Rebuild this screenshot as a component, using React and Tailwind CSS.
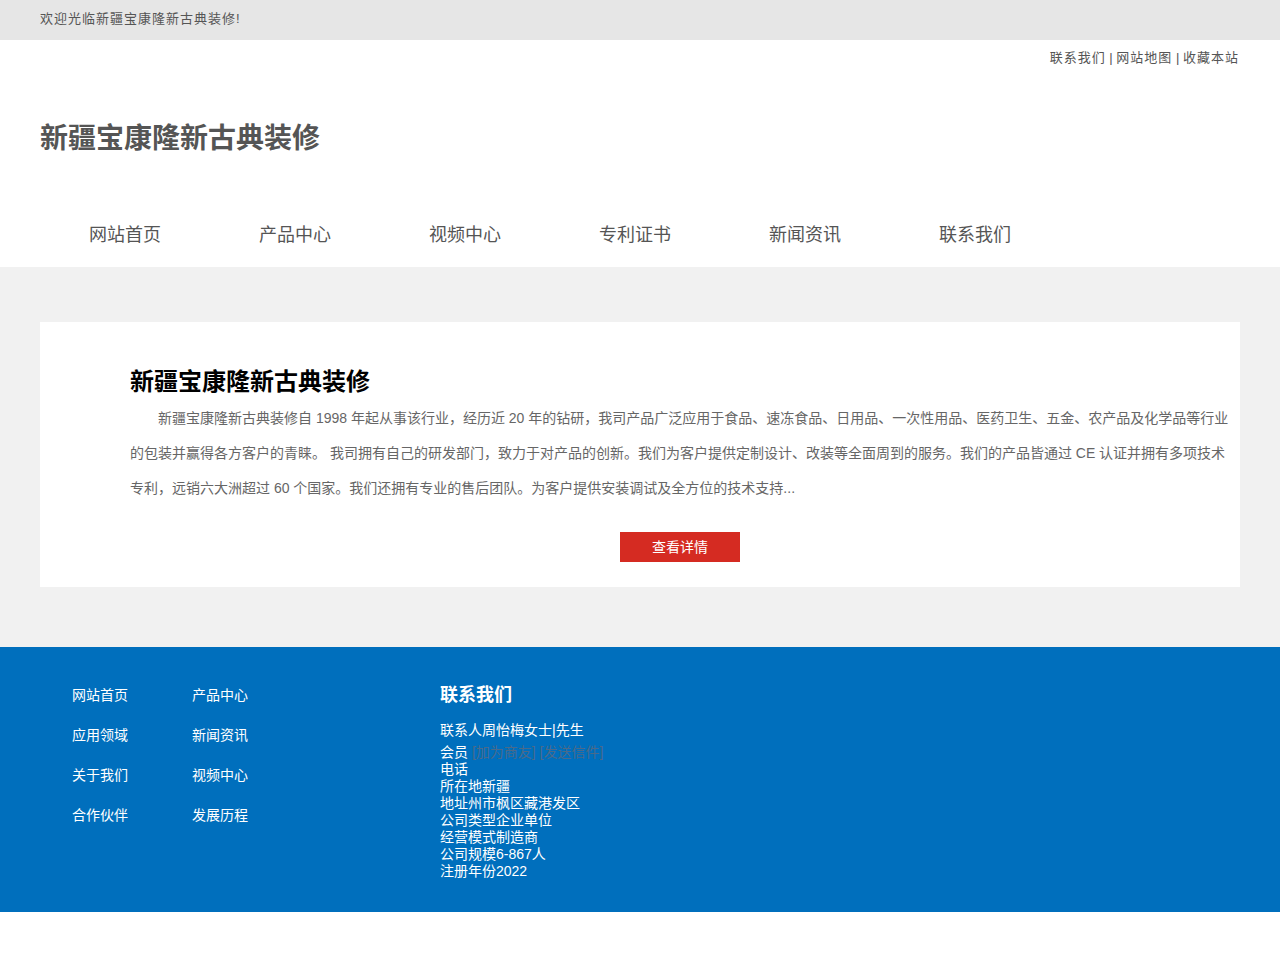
export default function App() {
  const font = { fontFamily: '"Liberation Sans", "Noto Sans CJK SC", sans-serif' };
  const nav = ["网站首页", "产品中心", "视频中心", "专利证书", "新闻资讯", "联系我们"];
  const footLinks = [
    ["网站首页", "产品中心"],
    ["应用领域", "新闻资讯"],
    ["关于我们", "视频中心"],
    ["合作伙伴", "发展历程"],
  ];
  return (
    <div style={font} className="w-[1280px] bg-white">
      <div className="h-[40px] bg-[#e6e6e6] flex items-center px-[40px] pb-[3px] text-[13px] tracking-[1px] text-[#555]">
        欢迎光临新疆宝康隆新古典装修!
      </div>
      <div className="h-[227px] bg-white px-[40px] flex flex-col">
        <div className="flex justify-end pt-[9px] text-[13px] text-[#555] leading-[18px] pr-[1px] whitespace-pre">
          <span className="tracking-[1px]">联系我们</span>
          <span> | </span>
          <span className="tracking-[1px]">网站地图</span>
          <span> | </span>
          <span className="tracking-[1px]">收藏本站</span>
        </div>
        <div className="mt-[53px] text-[28px] font-bold text-[#555] leading-[38px]">新疆宝康隆新古典装修</div>
        <div className="flex mt-[65px]">
          {nav.map((n) => (
            <div key={n} className="w-[170px] text-center text-[18px] text-[#555] leading-[24px]">{n}</div>
          ))}
        </div>
      </div>
      <div className="bg-[#f1f1f1] pt-[55px] pb-[60px] px-[40px]">
        <div className="bg-white h-[265px] pl-[90px] pr-[10px] pt-[43px]">
          <div className="text-[24px] font-bold text-black leading-[34px]">新疆宝康隆新古典装修</div>
          <p className="text-[14px] text-[#666] leading-[35px] indent-[28px] mt-[2px]">
            新疆宝康隆新古典装修自 1998 年起从事该行业，经历近 20 年的钻研，我司产品广泛应用于食品、速冻食品、日用品、一次性用品、医药卫生、五金、农产品及化学品等行业的包装并赢得各方客户的青睐。 我司拥有自己的研发部门，致力于对产品的创新。我们为客户提供定制设计、改装等全面周到的服务。我们的产品皆通过 CE 认证并拥有多项技术专利，远销六大洲超过 60 个国家。我们还拥有专业的售后团队。为客户提供安装调试及全方位的技术支持...
          </p>
          <div className="flex justify-center mt-[26px]">
            <div className="w-[120px] h-[30px] bg-[#d52b22] text-white text-[14px] flex items-center justify-center">查看详情</div>
          </div>
        </div>
      </div>
      <div className="bg-[#006fbd] h-[265px] flex text-white">
        <div className="pl-[72px] pt-[38px] w-[440px]">
          {footLinks.map((row, i) => (
            <div key={i} className="flex h-[40px] text-[14px] leading-[20px]">
              <div className="w-[120px]">{row[0]}</div>
              <div>{row[1]}</div>
            </div>
          ))}
        </div>
        <div className="pt-[36px]">
          <div className="text-[18px] font-bold leading-[24px]">联系我们</div>
          <div className="text-[14px] leading-[20px] mt-[13px]">联系人周怡梅女士|先生</div>
          <div className="text-[14px] leading-[17px] mt-[4px]">
            <div>会员 <span className="text-[#4a6a8a]">[加为商友] [发送信件]</span></div>
            <div>电话</div>
            <div>所在地新疆</div>
            <div>地址州市枫区藏港发区</div>
            <div>公司类型企业单位</div>
            <div>经营模式制造商</div>
            <div>公司规模6-867人</div>
            <div>注册年份2022</div>
          </div>
        </div>
      </div>
      <div className="h-[48px] bg-white"></div>
    </div>
  );
}
